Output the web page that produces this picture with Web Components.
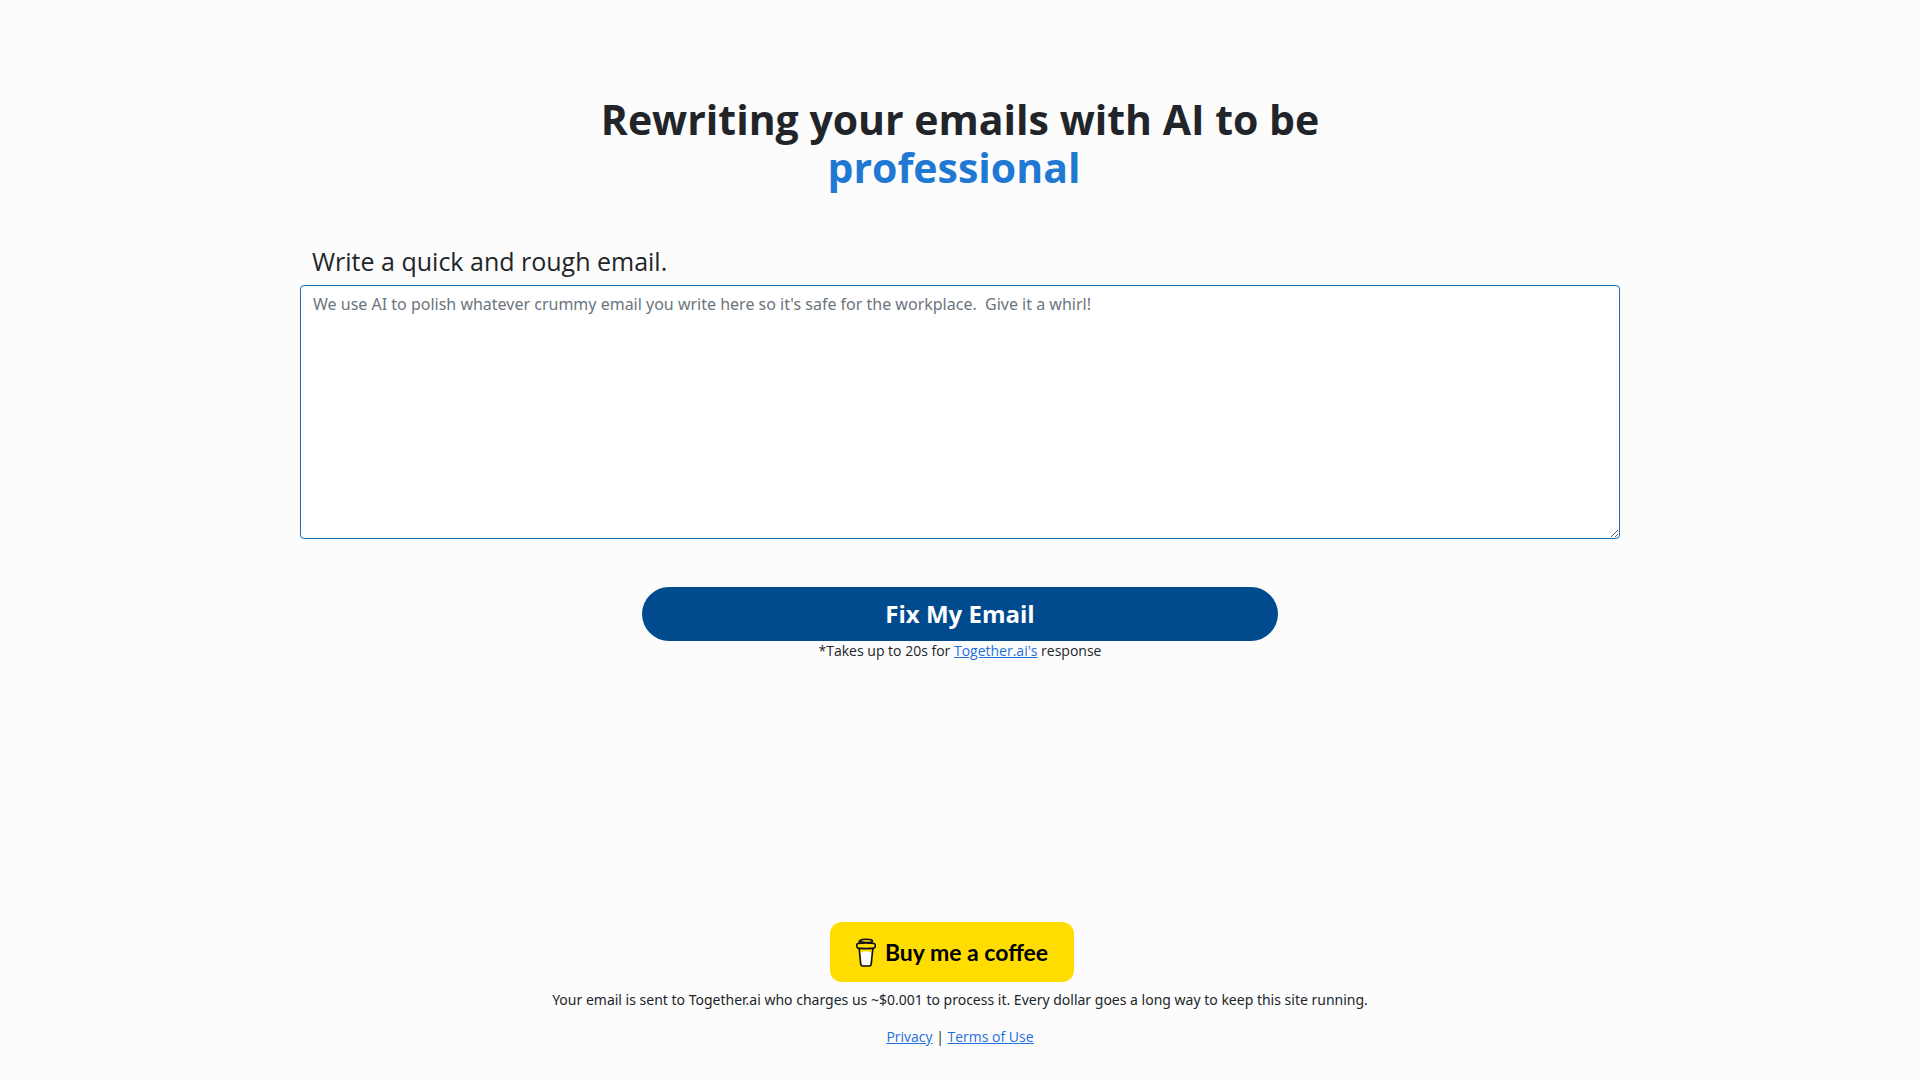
<!DOCTYPE html>
<html lang="en">
<head>
<meta charset="utf-8">
<meta name="viewport" content="width=device-width, initial-scale=1">
<title>Professional Email Rewriter</title>
<style>
  html, body { height: 100%; margin: 0; }
  body {
    background: #fcfcfc;
    color: #212529;
    font-family: "Open Sans", "Noto Sans", sans-serif;
    font-size: 16px;
    line-height: 24px;
  }
</style>
</head>
<body>
<email-app>
  <page-title slot="title">Rewriting your emails with AI to be<span slot="accent">professional</span></page-title>
  <email-form slot="form"></email-form>
  <coffee-button slot="footer"></coffee-button>
  <site-footer slot="footer"></site-footer>
</email-app>

<script>
  const define = (name, html) => {
    const template = document.createElement('template');
    template.innerHTML = html;
    customElements.define(name, class extends HTMLElement {
      constructor() {
        super();
        this.attachShadow({ mode: 'open' }).append(template.content.cloneNode(true));
      }
    });
  };

  define('email-app', `
    <style>
      :host { display: flex; flex-direction: column; min-height: 100%; box-sizing: border-box; padding: 95px 24px 33px; }
      main { display: flex; flex-direction: column; gap: 48px; width: 100%; max-width: 1320px; margin: 0 auto; }
      footer { display: flex; flex-direction: column; align-items: center; margin-top: auto; }
    </style>
    <main><slot name="title"></slot><slot name="form"></slot></main>
    <footer><slot name="footer"></slot></footer>
  `);

  define('page-title', `
    <style>
      :host { display: block; text-align: center; }
      h1 { margin: 0; font-size: 41px; line-height: 48px; font-weight: 700; }
      .accent { display: block; color: #1f78d1; padding-right: 12px; }
    </style>
    <h1><slot></slot><span class="accent"><slot name="accent"></slot></span></h1>
  `);

  define('email-form', `
    <style>
      :host { display: block; }
      form { display: flex; flex-direction: column; align-items: center; }
      label { align-self: stretch; padding: 0 12px; font-size: 25px; line-height: 32px; margin: 6px 0 8px; }
      textarea {
        display: block; box-sizing: border-box; width: 100%; height: 254px; margin: 0 0 48px;
        padding: 6px 12px; border: 1px solid #1c6ab8; border-radius: 4px; background: #fff;
        color: inherit; font: inherit; font-family: "Noto Sans", sans-serif; resize: vertical; outline: none;
      }
      textarea::placeholder { color: #6c757d; opacity: 1; }
      button {
        width: 100%; max-width: 636px; height: 54px; padding: 0; border: 0; border-radius: 27px;
        background: #004b8d; color: #fff; font: inherit; font-size: 24px; font-weight: 700; cursor: pointer;
      }
      p { margin: 0; font-size: 14px; line-height: 20px; }
      a { color: #1f6fdb; }
    </style>
    <form>
      <label for="draft">Write a quick and rough email.</label>
      <textarea id="draft" placeholder="We use AI to polish whatever crummy email you write here so it's safe for the workplace.  Give it a whirl!"></textarea>
      <button type="button">Fix My Email</button>
      <p>*Takes up to 20s for <a href="#together">Together.ai's</a> response</p>
    </form>
  `);

  define('coffee-button', `
    <style>
      :host { display: block; padding-right: 16px; }
      a {
        display: flex; align-items: center; justify-content: center; gap: 9px; box-sizing: border-box;
        width: 244px; height: 60px; border-radius: 12px; background: #fd0; color: #000;
        font-family: Lato, sans-serif; font-size: 23px; font-weight: 700; text-decoration: none;
      }
      svg { width: 20px; height: 29px; flex: none; }
    </style>
    <a href="#coffee">
      <svg viewBox="0 0 20 29" fill="none" stroke="#0d0c22" stroke-width="1.6" stroke-linecap="round" stroke-linejoin="round" aria-hidden="true">
        <path d="M4.600 14q5-1 10.800 0l-1.300 12.300q-.2 1-1.200 1H7q-1 0-1.200-1z" fill="#fff" stroke="none"/>
        <path d="M3.100 10.400l1.600 15.700q.2 1.900 2 1.900h6.500q1.800 0 2-1.900l1.700-15.700"/>
        <path d="M1.800 5.500q8.200-1.300 16.400 0 1 .2 1 1.200v1.900q0 1.300-1.300 1.500-7.900 1-15.800 0Q.8 9.900.8 8.600V6.700q0-1 1-1.200z"/>
        <path d="M3.200 5.200c-.6-2.600 1.500-4 6.500-4 4.800 0 7.300.9 6.700 2.100-.7 1.400-8.700 1.700-11.300.3"/>
      </svg>
      <span>Buy me a coffee</span>
    </a>
  `);

  define('site-footer', `
    <style>
      :host { display: block; text-align: center; font-size: 14px; line-height: 21px; }
      p { margin: 7px 0 16px; font-family: "Noto Sans", sans-serif; }
      nav { margin: 0; }
      a { color: #1f6fdb; }
    </style>
    <p>Your email is sent to Together.ai who charges us ~$0.001 to process it. Every dollar goes a long way to keep this site running.</p>
    <nav><a href="#privacy">Privacy</a> | <a href="#terms">Terms of Use</a></nav>
  `);
</script>
</body>
</html>
